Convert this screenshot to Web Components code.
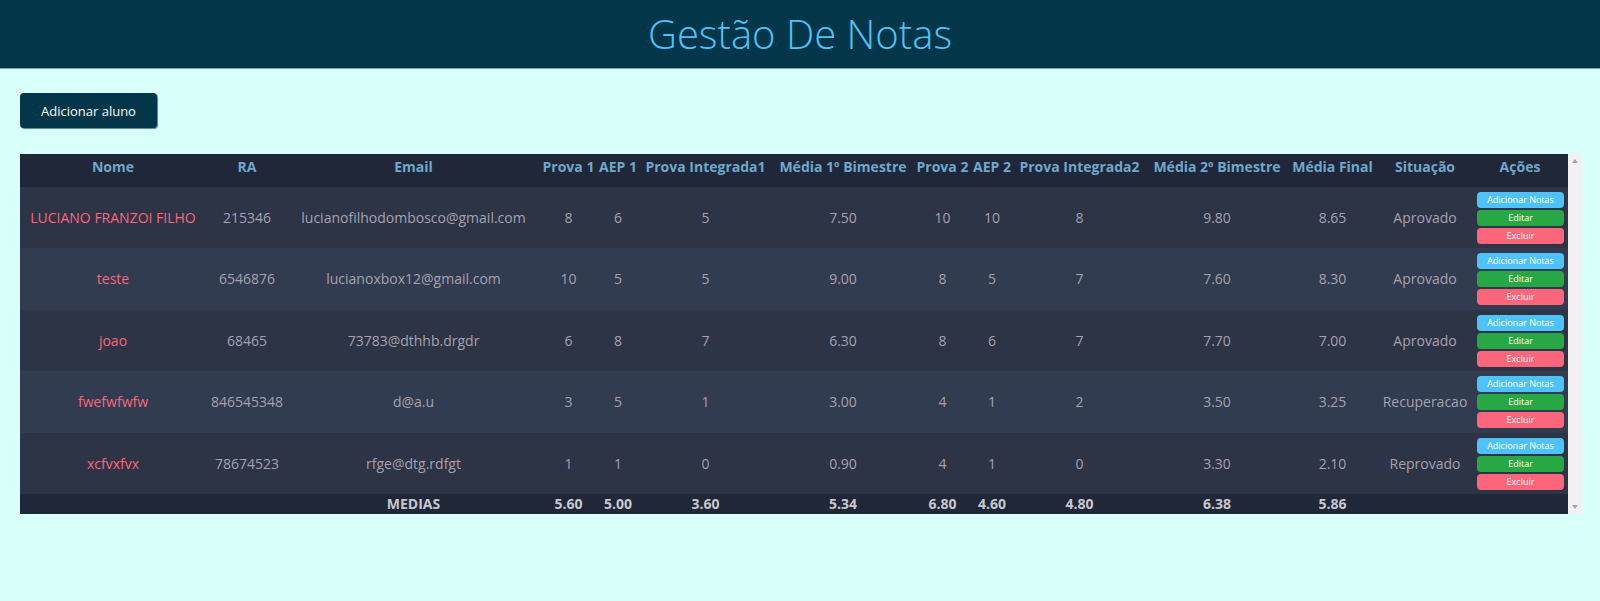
<!DOCTYPE html>
<html lang="pt-BR">
<head>
<meta charset="utf-8">
<title>Gestão De Notas</title>
<style>
  body { margin: 0; background: #d9fffb; font: 14px/20px "Open Sans", sans-serif; }
</style>
</head>
<body>
<grades-app>
  <page-header>Gestão De Notas</page-header>
  <add-button>Adicionar aluno</add-button>
  <scroll-panel><grades-table></grades-table></scroll-panel>
</grades-app>
<script>
const shadow = (el, html) => { el.attachShadow({ mode: "open" }).innerHTML = html; };

customElements.define("grades-app", class extends HTMLElement {
  constructor() {
    super();
    shadow(this, `
      <style>
        :host { display: block; }
        ::slotted(add-button) { margin: 25px 20px 0; }
        ::slotted(scroll-panel) { margin: 26px 18px 0 20px; }
      </style>
      <slot></slot>`);
  }
});

customElements.define("page-header", class extends HTMLElement {
  constructor() {
    super();
    shadow(this, `
      <style>
        :host { display: block; background: #033649; box-shadow: 0 1px 0 #7fa5a8; }
        h1 { margin: 0; padding: 7px 0; font-size: 40px; line-height: 54px; font-weight: 300; text-align: center; color: #4dc3fa; }
      </style>
      <header><h1><slot></slot></h1></header>`);
  }
});

customElements.define("add-button", class extends HTMLElement {
  constructor() {
    super();
    shadow(this, `
      <style>
        :host { display: block; }
        button { display: block; padding: 9px 21px 7px; border: 0; border-radius: 4px; background: #033649; color: #fff;
          font: 13px/19px "Open Sans", sans-serif; box-shadow: 1px 1px 1px #5c7f85; cursor: pointer; }
      </style>
      <button type="button"><slot></slot></button>`);
  }
});

customElements.define("scroll-panel", class extends HTMLElement {
  constructor() {
    super();
    shadow(this, `
      <style>
        :host { display: flex; }
        .content { flex: 1; min-width: 0; }
        .bar { width: 14px; display: flex; flex-direction: column; justify-content: space-between; align-items: center;
          padding: 5px 0; box-sizing: border-box; background: #f1f1f1; }
        svg { display: block; fill: #a3a3a3; }
      </style>
      <div class="content"><slot></slot></div>
      <div class="bar" aria-hidden="true">
        <svg width="6" height="4" viewBox="0 0 6 4"><path d="M3 0 6 4H0z"/></svg>
        <svg width="6" height="4" viewBox="0 0 6 4"><path d="M0 0H6L3 4z"/></svg>
      </div>`);
  }
});

customElements.define("row-actions", class extends HTMLElement {
  constructor() {
    super();
    shadow(this, `
      <style>
        :host { display: flex; flex-direction: column; gap: 2px; padding: 0 4px 0 5px; }
        button { height: 16px; padding: 0; border: 0; border-radius: 4px; color: #fff;
          font: 9px/16px "Open Sans", sans-serif; cursor: pointer; }
        .notes { background: #4dc3fa; }
        .edit { background: #28a745; }
        .delete { background: #fb667a; }
      </style>
      <button type="button" class="notes">Adicionar Notas</button>
      <button type="button" class="edit">Editar</button>
      <button type="button" class="delete">Excluir</button>`);
  }
});

const columns = [
  ["Nome", 186], ["RA", 82], ["Email", 251], ["Prova 1", 59], ["AEP 1", 40], ["Prova Integrada1", 135],
  ["Média 1º Bimestre", 140], ["Prova 2", 59], ["AEP 2", 40], ["Prova Integrada2", 135],
  ["Média 2º Bimestre", 140], ["Média Final", 91], ["Situação", 94], ["Ações", 96]
];
const students = [
  ["LUCIANO FRANZOI FILHO", "215346", "lucianofilhodombosco@gmail.com", "8", "6", "5", "7.50", "10", "10", "8", "9.80", "8.65", "Aprovado"],
  ["teste", "6546876", "lucianoxbox12@gmail.com", "10", "5", "5", "9.00", "8", "5", "7", "7.60", "8.30", "Aprovado"],
  ["joao", "68465", "73783@dthhb.drgdr", "6", "8", "7", "6.30", "8", "6", "7", "7.70", "7.00", "Aprovado"],
  ["fwefwfwfw", "846545348", "d@a.u", "3", "5", "1", "3.00", "4", "1", "2", "3.50", "3.25", "Recuperacao"],
  ["xcfvxfvx", "78674523", "rfge@dtg.rdfgt", "1", "1", "0", "0.90", "4", "1", "0", "3.30", "2.10", "Reprovado"]
];
const averages = ["", "", "MEDIAS", "5.60", "5.00", "3.60", "5.34", "6.80", "4.60", "4.80", "6.38", "5.86", "", ""];
const cells = (tag, list) => list.map(v => `<${tag}>${v}</${tag}>`).join("");

customElements.define("grades-table", class extends HTMLElement {
  constructor() {
    super();
    shadow(this, `
      <style>
        :host { display: block; }
        table { width: 100%; table-layout: fixed; border-collapse: collapse; background: #1f2739; text-align: center; }
        th, td { padding: 0; white-space: nowrap; }
        th { height: 33px; padding-bottom: 8px; box-sizing: border-box; color: #6fa8cc; font-weight: 700; }
        tbody td { height: 61px; color: #a7a1ae; }
        tbody tr { background: #2c3446; }
        tbody tr:nth-child(even) { background: #323c50; }
        tbody tr:nth-child(even) td { height: 62px; }
        tbody td:first-child { color: #fb667a; }
        tfoot td { height: 20px; color: #c8c8cc; font-weight: 700; }
      </style>
      <table>
        <colgroup>${columns.map(c => `<col style="width:${c[1]}px">`).join("")}</colgroup>
        <thead><tr>${columns.map(c => `<th scope="col">${c[0]}</th>`).join("")}</tr></thead>
        <tbody>${students.map(s => `<tr>${cells("td", s)}<td><row-actions></row-actions></td></tr>`).join("")}</tbody>
        <tfoot><tr>${cells("td", averages)}</tr></tfoot>
      </table>`);
  }
});
</script>
</body>
</html>
